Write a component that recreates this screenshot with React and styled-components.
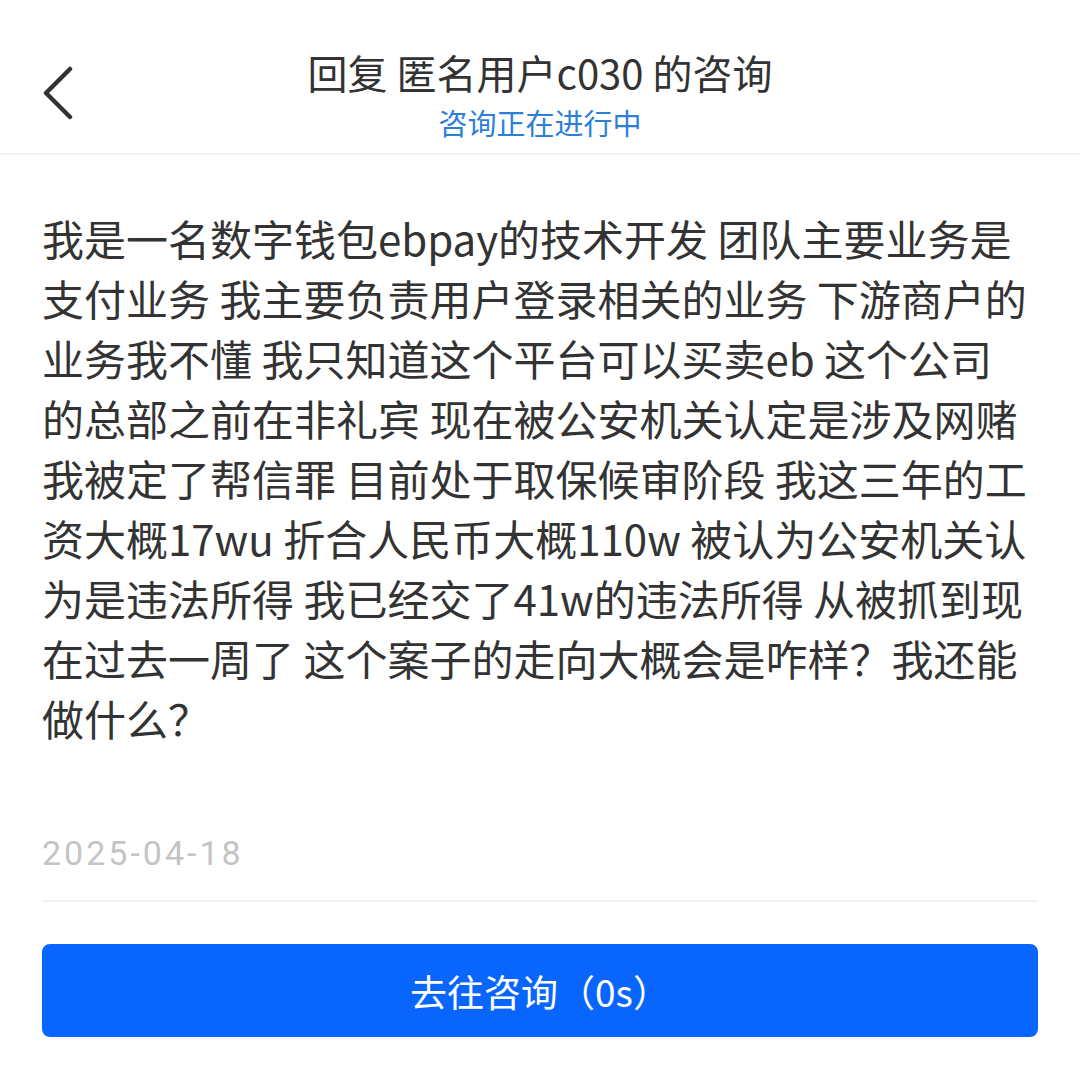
import React from "react";
import styled, { createGlobalStyle } from "styled-components";

const lines = [
  "我是一名数字钱包ebpay的技术开发 团队主要业务是",
  "支付业务 我主要负责用户登录相关的业务 下游商户的",
  "业务我不懂 我只知道这个平台可以买卖eb 这个公司",
  "的总部之前在非礼宾 现在被公安机关认定是涉及网赌",
  "我被定了帮信罪 目前处于取保候审阶段 我这三年的工",
  "资大概17wu 折合人民币大概110w 被认为公安机关认",
  "为是违法所得 我已经交了41w的违法所得 从被抓到现",
  "在过去一周了 这个案子的走向大概会是咋样？我还能",
  "做什么？",
];

const App = () => {
  return (
    <Page>
      <GlobalStyle />
      <Header>
        <BackButton aria-label="返回">
          <svg width="34" height="54" viewBox="0 0 34 54">
            <polyline
              points="30,3 6,27 30,51"
              fill="none"
              stroke="#333"
              strokeWidth="4.5"
              strokeLinecap="round"
              strokeLinejoin="round"
            />
          </svg>
        </BackButton>
        <TitleBlock>
          <Title>回复 匿名用户c030 的咨询</Title>
          <Status>咨询正在进行中</Status>
        </TitleBlock>
        <span />
      </Header>

      <Content>
        <Question>
          {lines.map((line, i) => (
            <Line key={i}>{line}</Line>
          ))}
        </Question>
        <DateText>2025-04-18</DateText>
        <Divider />
        <ActionButton>去往咨询（0s）</ActionButton>
      </Content>
    </Page>
  );
};

const GlobalStyle = createGlobalStyle`
  html, body {
    margin: 0;
    padding: 0;
    background: #ffffff;
  }
  body {
    font-family: "Noto Sans CJK SC", "Noto Sans", sans-serif;
  }
`;

const Page = styled.div`
  width: 1080px;
  min-height: 1085px;
  background: #fff;
`;

const Header = styled.div`
  display: grid;
  grid-template-columns: 120px 1fr 120px;
  align-items: start;
  height: 155px;
  box-sizing: border-box;
  padding-top: 42px;
  border-bottom: 2px solid #f3f3f3;
`;

const BackButton = styled.div`
  padding-left: 40px;
  padding-top: 24px;
  line-height: 0;
`;

const TitleBlock = styled.div`
  display: flex;
  flex-direction: column;
  align-items: center;
`;

const Title = styled.div`
  font-size: 40px;
  line-height: 60px;
  color: #333333;
  white-space: nowrap;
`;

const Status = styled.div`
  margin-top: 0;
  font-size: 29px;
  line-height: 40px;
  color: #2b7fd9;
`;

const Content = styled.div`
  padding: 53px 42px 0;
`;

const Question = styled.div`
  font-size: 42px;
  line-height: 60px;
  color: #333333;
`;

const Line = styled.div`
  white-space: nowrap;
`;

const DateText = styled.div`
  margin-top: 81px;
  font-family: Roboto, "Liberation Sans", sans-serif;
  font-size: 34px;
  letter-spacing: 3px;
  line-height: 48px;
  color: #c4c4c4;
`;

const Divider = styled.div`
  margin-top: 23px;
  height: 2px;
  background: #f3f3f3;
`;

const ActionButton = styled.button`
  display: block;
  width: 100%;
  height: 93px;
  margin-top: 42px;
  border: none;
  border-radius: 8px;
  background: #0866ff;
  color: #fff;
  font-family: "Noto Sans CJK SC", sans-serif;
  font-size: 37px;
  cursor: pointer;
`;

export default App;
